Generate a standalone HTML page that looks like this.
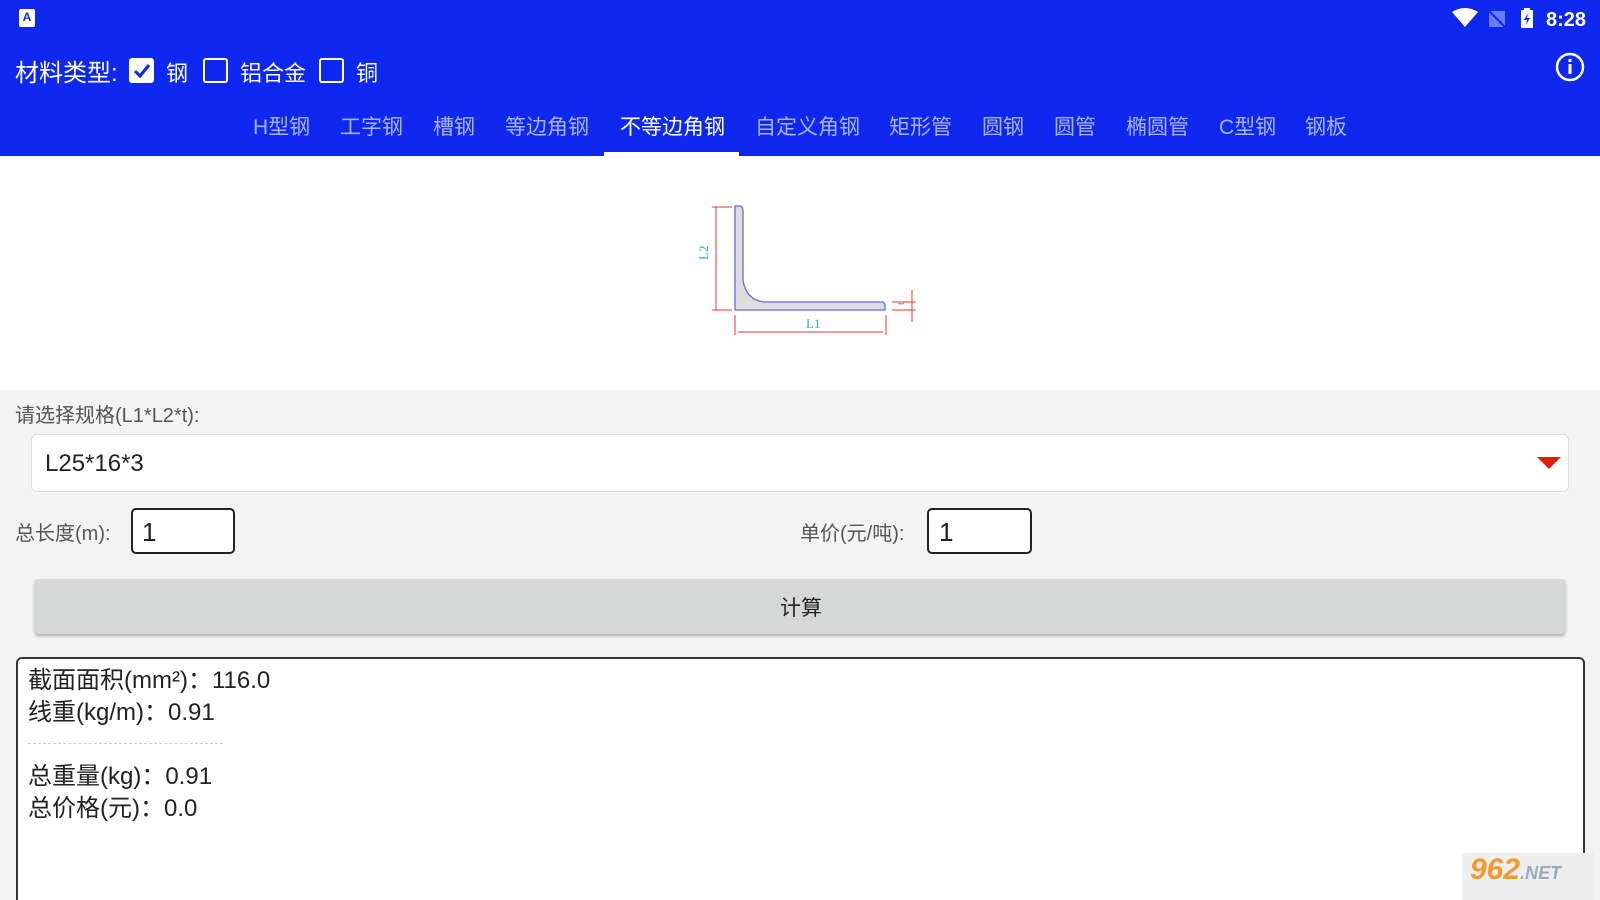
<!DOCTYPE html>
<html style="overflow:hidden;width:1600px;height:900px"><head><meta charset="utf-8"><style>
*{margin:0;padding:0;box-sizing:border-box}
body{width:1600px;height:900px;overflow:hidden;background:#f3f3f3;font-family:"Liberation Sans","Noto Sans CJK SC",sans-serif;position:relative}
.a{position:absolute;white-space:nowrap}
#hdr{position:absolute;left:0;top:0;width:1600px;height:156px;background:#0f28f0}
.tab{position:absolute;top:111px;font-size:21px;color:#a9b3f5}
.cb{position:absolute;top:58px;width:25px;height:25px;border:2.5px solid #fff;border-radius:3px}
.t24{font-size:24px;color:#222}
</style></head><body>
<div id="hdr"></div>
<div class="a" style="left:19px;top:9px;width:16px;height:18px;background:#fff;border-radius:2px;color:#0f28f0;font-size:12px;font-weight:bold;text-align:center;line-height:16px">A</div>
<svg class="a" style="left:1450px;top:6px" width="150" height="24" viewBox="0 0 150 24">
<path d="M2 6 Q15 -2 28 6 L15 21 Z" fill="#fff"/>
<path d="M39 5 H55 V21 H39 Z" fill="#6b7cf5"/><path d="M39 5 L55 21" stroke="#0f28f0" stroke-width="2"/>
<rect x="71" y="4" width="12" height="18" rx="1" fill="#fff"/><rect x="74" y="2" width="6" height="3" fill="#fff"/>
<path d="M78 7 L74 14 H77 L76 19 L80 12 H77 Z" fill="#0f28f0"/>
<text x="96" y="20" fill="#fff" font-size="20" font-family="Liberation Sans" font-weight="bold">8:28</text>
</svg>
<div class="a" style="left:15px;top:53px;font-size:24px;color:#fff">材料类型:</div>
<div class="cb" style="left:129px;background:#fff"></div>
<svg class="a" style="left:131px;top:60px" width="22" height="22"><path d="M4 11 L9 16 L18 5" stroke="#0f28f0" stroke-width="3" fill="none"/></svg>
<div class="a" style="left:166px;top:56px;font-size:22px;color:#fff">钢</div>
<div class="cb" style="left:203px"></div>
<div class="a" style="left:240px;top:56px;font-size:22px;color:#fff">铝合金</div>
<div class="cb" style="left:319px"></div>
<div class="a" style="left:356px;top:56px;font-size:22px;color:#fff">铜</div>
<svg class="a" style="left:1554px;top:51px" width="32" height="32"><circle cx="16" cy="16" r="13" stroke="#fff" stroke-width="2.5" fill="none"/><rect x="14.5" y="13" width="3" height="10" fill="#fff"/><rect x="14.5" y="8" width="3" height="3" fill="#fff"/></svg>
<div class="tab" style="left:253px">H型钢</div>
<div class="tab" style="left:340px">工字钢</div>
<div class="tab" style="left:433px">槽钢</div>
<div class="tab" style="left:505px">等边角钢</div>
<div class="tab" style="left:620px;color:#fff">不等边角钢</div>
<div class="tab" style="left:755px">自定义角钢</div>
<div class="tab" style="left:889px">矩形管</div>
<div class="tab" style="left:982px">圆钢</div>
<div class="tab" style="left:1054px">圆管</div>
<div class="tab" style="left:1126px">椭圆管</div>
<div class="tab" style="left:1219px">C型钢</div>
<div class="tab" style="left:1305px">钢板</div>
<div class="a" style="left:604px;top:152px;width:135px;height:4px;background:#fff"></div>
<div class="a" style="left:0;top:156px;width:1600px;height:234px;background:#fff"></div>
<svg class="a" style="left:660px;top:180px" width="280" height="170" viewBox="0 0 280 170">
<path d="M75 26 H80 Q83 26 83 32 V100 Q86 120 104 122 H222 Q225 122 225 126 V130 H75 Z" fill="#ddd" stroke="#6a6ad8" stroke-width="1.3"/>
<g stroke="#e33" stroke-width="1" fill="none"><path d="M52 27 H72 M52 130 H72 M56 27 V130 M75 135 V155 M226 135 V155 M78 152 H223 M232 122 H256 M232 130 H256 M252 110 V142"/></g>
<text x="48" y="80" fill="#29a8d8" font-size="13" font-family="Liberation Serif" transform="rotate(-90 48 80)">L2</text>
<text x="146" y="148" fill="#29a8d8" font-size="13" font-family="Liberation Serif">L1</text>
<text x="244" y="125" fill="#29a8d8" font-size="11" font-family="Liberation Serif" transform="rotate(-90 244 125)">t</text>
</svg>
<div class="a" style="left:15px;top:399px;font-size:20px;color:#555">请选择规格(L1*L2*t):</div>
<div class="a" style="left:31px;top:434px;width:1538px;height:58px;background:#fff;border:1.5px solid #ddd;border-radius:6px"></div>
<div class="a t24" style="left:45px;top:450px">L25*16*3</div>
<svg class="a" style="left:1536px;top:455px" width="26" height="16"><path d="M1 2 H25 L13 14 Z" fill="#d8200c"/></svg>
<div class="a" style="left:15px;top:517px;font-size:20px;color:#555">总长度(m):</div>
<div class="a" style="left:131px;top:508px;width:104px;height:46px;background:#fff;border:2px solid #222;border-radius:5px"></div>
<div class="a t24" style="left:142px;top:517px;font-size:26px">1</div>
<div class="a" style="left:800px;top:517px;font-size:20px;color:#555">单价(元/吨):</div>
<div class="a" style="left:927px;top:508px;width:105px;height:46px;background:#fff;border:2px solid #222;border-radius:5px"></div>
<div class="a t24" style="left:939px;top:517px;font-size:26px">1</div>
<div class="a" style="left:35px;top:579px;width:1530px;height:55px;background:#d6d7d7;border-radius:3px;box-shadow:0 2px 3px rgba(0,0,0,.3)"></div>
<div class="a" style="left:780px;top:592px;font-size:21px;color:#222">计算</div>
<div class="a" style="left:16px;top:657px;width:1569px;height:243px;background:#fff;border:2px solid #333;border-bottom:none;border-radius:6px 6px 0 0"></div>
<div class="a t24" style="left:28px;top:660px">截面面积(mm²)：116.0</div>
<div class="a t24" style="left:28px;top:692px">线重(kg/m)：0.91</div>
<div class="a" style="left:28px;top:743px;width:195px;border-top:1px dashed #ccc"></div>
<div class="a t24" style="left:28px;top:756px">总重量(kg)：0.91</div>
<div class="a t24" style="left:28px;top:788px">总价格(元)：0.0</div>
<div class="a" style="left:1462px;top:853px;width:132px;height:47px;background:#eee;font-size:30px;font-weight:bold;font-style:italic;color:#f29a2e;padding-left:8px;line-height:34px">962<span style="font-size:18px;color:#9ab">.NET</span></div>
</body></html>
